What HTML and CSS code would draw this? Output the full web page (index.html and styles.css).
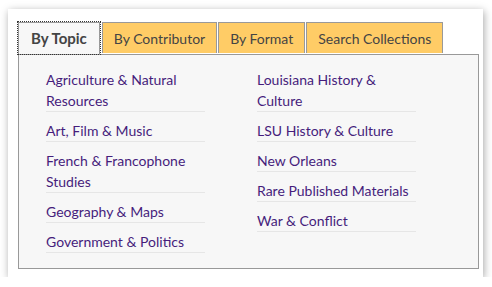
FILE: index.html
```html
<!DOCTYPE html>
<html lang="en">

<head>
    <meta charset="UTF-8">
    <meta name="viewport" content="width=device-width, initial-scale=1.0">
    <title>Collections</title>
    <link rel="stylesheet" href="styles.css">
</head>

<body>
    <div class="card">
        <ul class="tabs">
            <li class="tab active"><a href="#topic">By Topic</a></li>
            <li class="tab"><a href="#contributor">By Contributor</a></li>
            <li class="tab"><a href="#format">By Format</a></li>
            <li class="tab"><a href="#search">Search Collections</a></li>
        </ul>

        <div class="panel" id="topic">
            <ul class="topics">
                <li><a href="#">Agriculture &amp; Natural Resources</a></li>
                <li><a href="#">Art, Film &amp; Music</a></li>
                <li><a href="#">French &amp; Francophone Studies</a></li>
                <li><a href="#">Geography &amp; Maps</a></li>
                <li><a href="#">Government &amp; Politics</a></li>
            </ul>
            <ul class="topics">
                <li><a href="#">Louisiana History &amp; Culture</a></li>
                <li><a href="#">LSU History &amp; Culture</a></li>
                <li><a href="#">New Orleans</a></li>
                <li><a href="#">Rare Published Materials</a></li>
                <li><a href="#">War &amp; Conflict</a></li>
            </ul>
        </div>
    </div>
</body>

</html>
```

FILE: styles.css
```css
* {
    margin: 0;
    padding: 0;
    box-sizing: border-box;
}

body {
    background: #fff;
    font-family: "Lato", "Open Sans", sans-serif;
    font-size: 14px;
    padding: 9px 0 0 8px;
}

.card {
    width: 475px;
    height: 268px;
    background: #fff;
    box-shadow: 1px 2px 8px rgba(0, 0, 0, 0.35);
    padding: 13px 0 0 10px;
}

.tabs {
    list-style: none;
    display: flex;
    gap: 1px;
    position: relative;
    z-index: 1;

    .tab {
        height: 31px;
        border: 1px solid #999;
        border-bottom: none;
        background: #ffcc66;
    }

    .tab a {
        display: block;
        padding: 1px 11px 0;
        line-height: 29px;
        color: #444;
        text-decoration: none;
    }

    .active {
        height: 32px;
        background: #f7f7f7;
        outline: 1px dotted #333;
        margin-right: 1px;
    }

    .active a {
        padding: 1px 12px 0;
        font-weight: bold;
        font-size: 15px;
        color: #444;
    }
}

.panel {
    width: 461px;
    height: 215px;
    background: #f7f7f7;
    border: 1px solid #999;
    display: flex;
    gap: 52px;
    padding: 6px 0 0 27px;
}

.topics {
    list-style: none;
    width: 159px;

    li {
        padding-top: 8px;
        line-height: 21px;
        border-bottom: 1px solid #e6e6e6;
    }

    a {
        color: #461d7c;
        text-decoration: none;
    }
}
```
